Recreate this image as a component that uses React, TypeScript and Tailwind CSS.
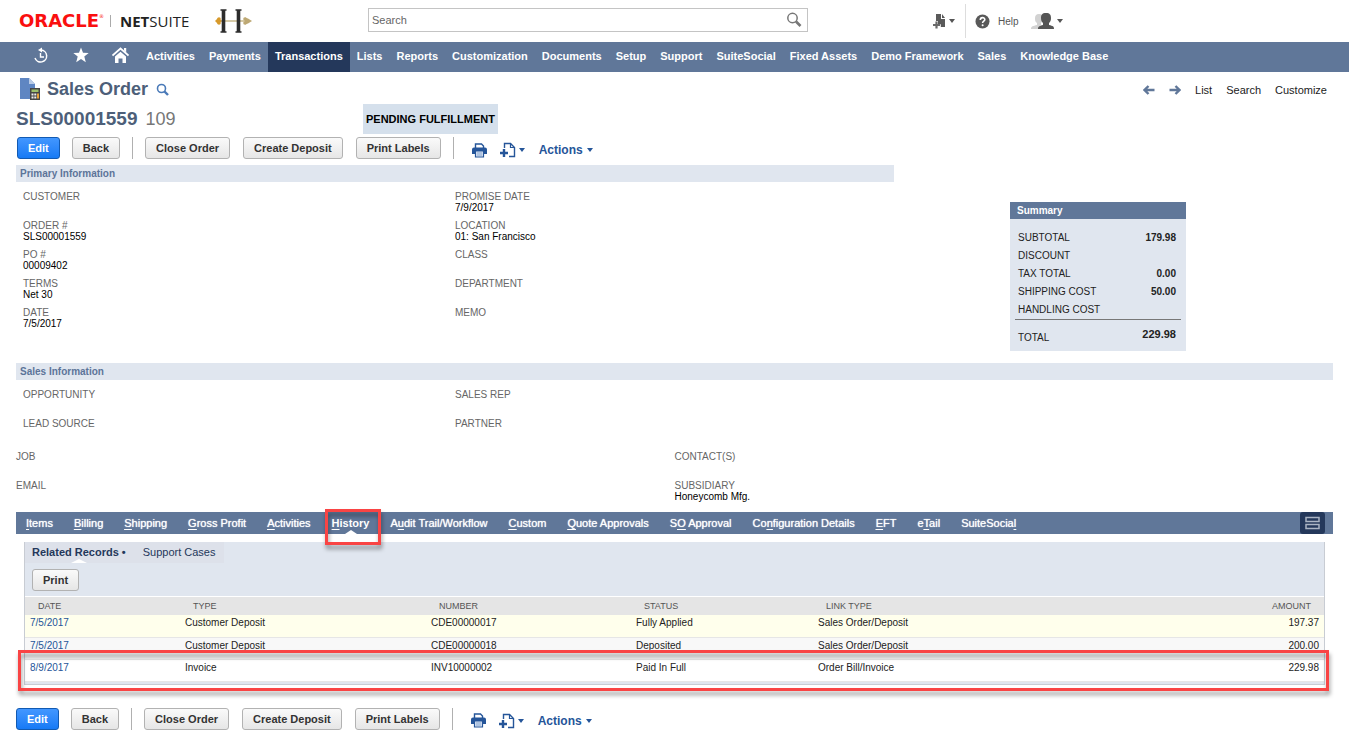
import { useState } from 'react';
import clsx from 'clsx';

type FieldData = { label: string; value?: string };

const navItems = [
  'Activities', 'Payments', 'Transactions', 'Lists', 'Reports', 'Customization', 'Documents',
  'Setup', 'Support', 'SuiteSocial', 'Fixed Assets', 'Demo Framework', 'Sales', 'Knowledge Base',
];

const primaryLeft: FieldData[] = [
  { label: 'CUSTOMER' },
  { label: 'ORDER #', value: 'SLS00001559' },
  { label: 'PO #', value: '00009402' },
  { label: 'TERMS', value: 'Net 30' },
  { label: 'DATE', value: '7/5/2017' },
];

const primaryRight: FieldData[] = [
  { label: 'PROMISE DATE', value: '7/9/2017' },
  { label: 'LOCATION', value: '01: San Francisco' },
  { label: 'CLASS' },
  { label: 'DEPARTMENT' },
  { label: 'MEMO' },
];

const summary = [
  { label: 'SUBTOTAL', value: '179.98' },
  { label: 'DISCOUNT', value: '' },
  { label: 'TAX TOTAL', value: '0.00' },
  { label: 'SHIPPING COST', value: '50.00' },
  { label: 'HANDLING COST', value: '' },
];

// [text, index of the underlined access key]
const tabs: [string, number][] = [
  ['Items', 0], ['Billing', 0], ['Shipping', 0], ['Gross Profit', 0], ['Activities', 0],
  ['History', 0], ['Audit Trail/Workflow', 1], ['Custom', 0], ['Quote Approvals', 0],
  ['SO Approval', 1], ['Configuration Details', 2], ['EFT', 0], ['eTail', 1], ['SuiteSocial', 10],
];

const records = [
  { date: '7/5/2017', type: 'Customer Deposit', number: 'CDE00000017', status: 'Fully Applied', link: 'Sales Order/Deposit', amount: '197.37' },
  { date: '7/5/2017', type: 'Customer Deposit', number: 'CDE00000018', status: 'Deposited', link: 'Sales Order/Deposit', amount: '200.00' },
  { date: '8/9/2017', type: 'Invoice', number: 'INV10000002', status: 'Paid In Full', link: 'Order Bill/Invoice', amount: '229.98' },
];

function Caret({ className }: { className?: string }) {
  return (
    <svg width="6" height="4" viewBox="0 0 6 4" className={className} fill="currentColor">
      <path d="M0 0h6L3 4z" />
    </svg>
  );
}

function CompanyLogo() {
  return (
    <svg width="38" height="26" viewBox="0 0 38 26">
      <path d="M4 13h30" stroke="#c9b98a" strokeWidth="1.500" />
      <path d="M0 13l3-3 4 3-4 3z" fill="#d79a2b" />
      <circle cx="4" cy="11" r="1.800" fill="#d79a2b" />
      <circle cx="4" cy="15" r="1.800" fill="#d79a2b" />
      <circle cx="30" cy="11" r="1.800" fill="#bda873" />
      <circle cx="30" cy="15" r="1.800" fill="#bda873" />
      <path d="M37 13l-4-2.500-3-1v7l3-1z" fill="#bda873" />
      <path d="M5.500 2h6M5.500 24h6M20.500 2h6M20.500 24h6" stroke="#2c2c2c" strokeWidth="1.500" />
      <path d="M8.500 2v22M23.500 2v22" stroke="#2c2c2c" strokeWidth="3.600" />
    </svg>
  );
}

function PrinterIcon() {
  return (
    <svg width="15" height="15" viewBox="0 0 15 15">
      <path d="M3.500 5V1h6l2 2v2" fill="#fff" stroke="#255599" strokeWidth="1.400" />
      <path d="M2 4.500h11a2 2 0 0 1 2 2V11H0V6.500a2 2 0 0 1 2-2z" fill="#255599" />
      <path d="M3.500 8h8v6h-8z" fill="#dfe8f5" stroke="#255599" strokeWidth="1.200" />
      <path d="M5 10h5M5 12h5" stroke="#7f9fcc" />
    </svg>
  );
}

function NewDocIcon() {
  return (
    <svg width="17" height="16" viewBox="0 0 17 16" fill="none" stroke="#255599">
      <path d="M5.500 6V1.500h6l4 4v9H10" strokeWidth="1.400" />
      <path d="M11.500 1.500v4h4" strokeWidth="1.200" />
      <path d="M5 7v8M1 11h8" strokeWidth="2.400" />
    </svg>
  );
}

function Header() {
  return (
    <header className="flex h-[42px] items-center">
      <div className="flex w-[368px] shrink-0 items-center pl-[19px]">
        <div className="flex w-[91px] items-start font-['DejaVu_Sans'] leading-4 text-[#fa0f0f]">
          <span className="text-[18px] font-bold">ORACLE</span>
          <span className="text-[5px] leading-[6px]">®</span>
        </div>
        <div className="h-3 w-px bg-[#aaa]" />
        <div className="ml-[9px] w-[85px] font-['Open_Sans'] text-[15px] leading-4 text-[#222]">
          <span className="font-bold">NET</span>SUITE
        </div>
        <div className="ml-2.5">
          <CompanyLogo />
        </div>
      </div>
      <div className="-mt-0.5 flex h-6 w-[440px] shrink-0 items-center border border-[#c4c4c4] pr-[5px]">
        <input
          type="text"
          aria-label="Search"
          placeholder="Search"
          className="h-full min-w-0 flex-1 px-[3px] text-[11px] text-[#333] outline-none placeholder:text-[#666]"
        />
        <button aria-label="Run search">
          <svg width="16" height="16" viewBox="0 0 16 16" fill="none" stroke="#777">
            <circle cx="6.500" cy="6" r="4.700" strokeWidth="1.500" />
            <path d="M10 9.500l4.500 4.500" strokeWidth="2.600" />
          </svg>
        </button>
      </div>
      <div className="ml-[124px] flex h-[34px] shrink-0 items-center text-[#555]">
        <button aria-label="Create new" className="flex items-center gap-px">
          <svg width="16" height="16" viewBox="0 0 16 16" fill="#5a5a5a">
            <path d="M4 1h5v5h4v8H8.800v-2.800H6V8H4z" />
            <path d="M10 1l3 4h-3z" />
            <path d="M4.500 8.500v7M1 12h7" stroke="#6a6a6a" strokeWidth="2.200" />
          </svg>
          <Caret />
        </button>
        <div className="ml-2.5 h-full w-px bg-[#ddd]" />
        <button className="ml-[9px] flex items-center gap-2 text-[10px]">
          <svg width="15" height="15" viewBox="0 0 15 15">
            <circle cx="7.500" cy="7.500" r="7" fill="#595959" />
            <path d="M5.300 5.900c0-3 4.500-2.900 4.500-.3 0 1.600-2.200 1.600-2.200 3.400" fill="none" stroke="#fff" strokeWidth="1.600" />
            <circle cx="7.600" cy="11.200" r="1" fill="#fff" />
          </svg>
          Help
        </button>
        <button aria-label="Change role" className="ml-3 flex items-center gap-0.5">
          <svg width="24" height="17" viewBox="0 0 24 17">
            <path d="M8 1c3 0 4 2 4 4s-1 4-2 5v2c3 1 4 1.500 4 4H0c0-3 2-3 6-4v-2C4 9 4 7 4 5s1-4 4-4z" fill="#d2d2d2" />
            <path d="M15 0c4 0 5 2 5 5s-1 4-2 5v2c4 1 5 1 5 4H7c0-3 2-3 5-4v-2c-1-1-2-2-2-5s1-5 5-5z" fill="#555" />
          </svg>
          <Caret />
        </button>
      </div>
    </header>
  );
}

function NavBar() {
  return (
    <nav className="flex h-[30px] items-stretch bg-[#607799] pl-[21px] text-[11px] font-bold text-white">
      <a href="#recent" aria-label="Recent records" className="flex w-10 items-center justify-center pb-1">
        <svg width="16" height="17" viewBox="0 0 16 17" fill="none" stroke="#fff">
          <path d="M8 3a6 6 0 1 1-6 8" strokeWidth="1.500" />
          <path d="M9 .5L5 3l4 2.500z" fill="#fff" stroke="none" />
          <path d="M7.500 6v4H11" strokeWidth="1.400" />
        </svg>
      </a>
      <a href="#shortcuts" aria-label="Shortcuts" className="flex w-10 items-center justify-center pb-1">
        <svg width="16" height="16" viewBox="0 0 16 16" fill="#fff">
          <path d="M8 .5l2 5.200 5.700.3-4.400 3.600 1.500 5.600L8 12l-4.800 3.200 1.500-5.600L.3 6 6 5.700z" />
        </svg>
      </a>
      <a href="#home" aria-label="Home" className="flex w-[38px] items-center justify-center pb-1">
        <svg width="17" height="17" viewBox="0 0 17 17">
          <path d="M.5 8.500l8-7 8 7" fill="none" stroke="#fff" strokeWidth="1.700" />
          <path d="M12 1h2.200v4.500L12 3.500z" fill="#fff" />
          <path d="M3 9.500L8.500 4.700 14 9.500V16h-3.500v-4.500h-4V16H3z" fill="#fff" />
        </svg>
      </a>
      {navItems.map((item) => (
        <a
          key={item}
          href="#nav"
          className={clsx('flex items-center whitespace-nowrap px-[7px] pb-px', item === 'Transactions' && 'bg-[#24385b]')}
        >
          {item}
        </a>
      ))}
    </nav>
  );
}

function GrayButton({ children }: { children: string }) {
  return (
    <button className="h-[22px] whitespace-nowrap rounded-[3px] border border-[#b2b2b2] bg-linear-to-b from-[#fafafa] to-[#e6e6e6] px-[10px] text-[11px] font-bold text-[#333]">
      {children}
    </button>
  );
}

function ActionBar() {
  return (
    <div className="flex items-center gap-3 text-[#255599]">
      <div className="flex gap-3">
        <button className="h-[22px] rounded-[3px] border border-[#125ab2] bg-linear-to-b from-[#4297ff] to-[#157af5] px-[10px] text-[11px] font-bold text-white">
          Edit
        </button>
        <GrayButton>Back</GrayButton>
      </div>
      <div className="h-[22px] w-px bg-[#b0b0b0]" />
      <div className="flex gap-[13px]">
        <GrayButton>Close Order</GrayButton>
        <GrayButton>Create Deposit</GrayButton>
        <GrayButton>Print Labels</GrayButton>
      </div>
      <div className="h-[22px] w-px bg-[#b0b0b0]" />
      <div className="flex items-center pl-1.5 pt-1">
        <button aria-label="Print">
          <PrinterIcon />
        </button>
        <button aria-label="New" className="ml-3 flex items-center gap-[3px]">
          <NewDocIcon />
          <Caret />
        </button>
        <button className="ml-3.5 flex items-center gap-1 text-[12px] font-bold leading-4">
          Actions
          <Caret />
        </button>
      </div>
    </div>
  );
}

function SectionBar({ title }: { title: string }) {
  return (
    <h2 className="h-[17px] bg-[#e0e6ef] pl-1 text-[10px] font-bold leading-[17px] text-[#5c7499]">{title}</h2>
  );
}

function FieldColumn({ fields, className }: { fields: FieldData[]; className?: string }) {
  return (
    <dl className={clsx('text-[10px] leading-[11px]', className)}>
      {fields.map((f) => (
        <div key={f.label} className="h-[29px]">
          <dt className="text-[#666]">{f.label}</dt>
          <dd className="text-black">{f.value}</dd>
        </div>
      ))}
    </dl>
  );
}

function SummaryBox() {
  return (
    <aside className="ml-[116px] mt-[37px] w-[176px] bg-[#e0e6ef] text-[10px] text-[#222]">
      <h2 className="h-[17px] bg-[#607799] pl-[7px] font-bold leading-[17px] text-white">Summary</h2>
      <dl className="mx-[5px] border-b border-[#777] pt-[10px]">
        {summary.map((s) => (
          <div key={s.label} className="flex h-[18px] justify-between pl-[3px] pr-[5px] leading-[18px]">
            <dt>{s.label}</dt>
            <dd className="font-bold">{s.value}</dd>
          </div>
        ))}
      </dl>
      <dl className="flex h-[31px] justify-between pl-2 pr-[10px]">
        <dt className="pt-1 leading-7">TOTAL</dt>
        <dd className="text-[11px] font-bold leading-7">229.98</dd>
      </dl>
    </aside>
  );
}

function TabBar({ active, onSelect }: { active: string; onSelect: (tab: string) => void }) {
  return (
    <div className="flex h-[22px] items-stretch gap-px bg-[#607799] pr-2 text-[11px] text-white">
      {tabs.map(([text, key]) => (
        <button
          key={text}
          onClick={() => onSelect(text)}
          className={clsx(
            'relative whitespace-nowrap px-[10px]',
            text === active ? 'font-bold' : 'text-shadow-[0_0_1px_#fff]',
          )}
        >
          {text.slice(0, key)}
          <span className="underline underline-offset-2">{text[key]}</span>
          {text.slice(key + 1)}
          {text === active && (
            <>
              <svg width="12" height="4" viewBox="0 0 12 4" className="absolute bottom-0 left-1/2 -translate-x-1/2">
                <path d="M0 4l6-4 6 4z" fill="#fff" />
              </svg>
              <span className="absolute -top-[3px] left-[3px] z-10 h-[36px] w-[56px] border-3 border-[#f94444] drop-shadow-[1px_4px_2px_rgba(0,0,0,0.4)]" />
            </>
          )}
        </button>
      ))}
      <button aria-label="Show all subtabs" className="ml-auto flex w-[25px] items-center justify-center rounded-[3px] bg-[#24385b]">
        <svg width="15" height="14" viewBox="0 0 15 14" fill="none" stroke="#aab4c4" strokeWidth="1.500">
          <path d="M1 1.500h13v4H1zM1 8.500h13v4H1z" />
        </svg>
      </button>
    </div>
  );
}

function RelatedRecords() {
  return (
    <section className="relative mx-2 mt-2">
      <div className="border-x border-b border-[#c8ccd3] bg-[#e0e6ef] pb-0.5">
        <div className="flex w-fit items-stretch bg-[#dde1ea] text-[11px] leading-[21px] text-[#24385b]">
          <button className="relative pl-[7px] pr-2 font-bold">
            Related Records •
            <svg width="16" height="4" viewBox="0 0 16 4" className="absolute bottom-0 left-1/2 -translate-x-1/2">
              <path d="M0 4l8-4 8 4z" fill="#fff" />
            </svg>
          </button>
          <button className="px-[9px]">Support Cases</button>
        </div>
        <div className="border-b border-white px-[7px] pb-[5px] pt-1">
          <GrayButton>Print</GrayButton>
        </div>
        <table className="w-full table-fixed border-collapse text-left text-[10px]">
          <thead>
            <tr className="h-[18px] bg-[#e5e5e5] text-[9px] text-[#555] [&>th]:py-0 [&>th]:pl-[13px] [&>th]:font-normal">
              <th className="w-[155px]">DATE</th>
              <th className="w-[246px]">TYPE</th>
              <th className="w-[205px]">NUMBER</th>
              <th className="w-[182px]">STATUS</th>
              <th>LINK TYPE</th>
              <th className="w-[80px] pr-[13px] text-right">AMOUNT</th>
            </tr>
          </thead>
          <tbody>
            {records.map((r, i) => (
              <tr
                key={r.number}
                className={clsx(
                  'h-[22px] border-b border-[#e6e6e6] align-top leading-[15px] text-[#222] [&>td]:px-[5px] [&>td]:py-0',
                  i === 0 ? 'bg-[#ffffec]' : i === 1 ? 'bg-[#f8f8f8]' : 'bg-white',
                )}
              >
                <td>
                  <a href="#record" className="text-[#255599]">{r.date}</a>
                </td>
                <td>{r.type}</td>
                <td>{r.number}</td>
                <td>{r.status}</td>
                <td>{r.link}</td>
                <td className="text-right">{r.amount}</td>
              </tr>
            ))}
          </tbody>
        </table>
      </div>
      <div className="pointer-events-none absolute -bottom-[6px] -left-[6px] -right-[4px] h-[41px] border-3 border-[#f94444] drop-shadow-[1px_4px_2px_rgba(0,0,0,0.4)]" />
    </section>
  );
}

function App() {
  const [activeTab, setActiveTab] = useState('History');

  return (
    <div className="min-h-screen bg-white font-['Liberation_Sans',Arial,sans-serif]">
      <Header />
      <NavBar />
      <main className="px-4 pb-4 pt-0.5">
        <div className="flex h-[30px] items-center justify-between pl-[3px] pr-1.5">
          <div className="flex items-center">
            <svg width="22" height="24" viewBox="0 0 22 24">
              <path d="M1 1h9l6 6v15H1z" fill="#5f86c2" />
              <path d="M10 1l6 6h-6z" fill="#b9cbe6" />
              <path d="M11 11h10v12H11z" fill="#454545" />
              <path d="M12.500 12.500h7v2.500h-7z" fill="#9cc06a" />
              <path d="M12.500 16.500h2v2h-2zM15.300 16.500h2v2h-2zM12.500 19.500h2v2h-2zM15.300 19.500h2v2h-2z" fill="#eee" />
              <path d="M18 16.500h2v5h-2z" fill="#e8a33a" />
            </svg>
            <h1 className="ml-1.5 text-[18px] font-bold leading-[30px] text-[#4d5f79]">Sales Order</h1>
            <button aria-label="Quick find" className="ml-2">
              <svg width="13" height="13" viewBox="0 0 13 13" fill="none" stroke="#4a7ab8">
                <circle cx="5.500" cy="5.500" r="4" strokeWidth="1.600" />
                <path d="M8.500 8.500l3.500 3.500" strokeWidth="2.400" />
              </svg>
            </button>
          </div>
          <div className="flex items-center gap-[14px] pt-0.5 text-[11px] text-[#222]">
            <a href="#prev" aria-label="Previous">
              <svg width="12" height="10" viewBox="0 0 12 10" fill="none" stroke="#607799" strokeWidth="2.400">
                <path d="M11.500 5H2M5.500 1L1.500 5l4 4" />
              </svg>
            </a>
            <a href="#next" aria-label="Next">
              <svg width="12" height="10" viewBox="0 0 12 10" fill="none" stroke="#607799" strokeWidth="2.400">
                <path d="M.5 5H10M6.500 1l4 4-4 4" />
              </svg>
            </a>
            <a href="#list">List</a>
            <a href="#search">Search</a>
            <a href="#customize">Customize</a>
          </div>
        </div>
        <div className="flex h-[30px] items-stretch">
          <div className="flex w-[347px] items-center gap-2 text-[19px] text-[#4d5f79]">
            <span className="font-bold">SLS00001559</span>
            <span className="text-[18px] text-[#777]">109</span>
          </div>
          <div className="flex items-center bg-[#d5e0ec] px-[3px] text-[11px] font-bold text-black">
            PENDING FULFILLMENT
          </div>
        </div>
        <div className="mt-[3px] pl-px">
          <ActionBar />
        </div>

        <section className="mt-1.5 grid grid-cols-3">
          <div className="col-span-2">
            <SectionBar title="Primary Information" />
            <div className="grid grid-cols-2 pt-[9px]">
              <FieldColumn fields={primaryLeft} className="pl-[7px]" />
              <FieldColumn fields={primaryRight} />
            </div>
          </div>
          <SummaryBox />
        </section>

        <section className="mt-3">
          <SectionBar title="Sales Information" />
          <div className="grid grid-cols-3 pt-[9px]">
            <FieldColumn fields={[{ label: 'OPPORTUNITY' }, { label: 'LEAD SOURCE' }]} className="pl-[7px]" />
            <FieldColumn fields={[{ label: 'SALES REP' }, { label: 'PARTNER' }]} />
          </div>
          <div className="mt-1 grid grid-cols-2">
            <FieldColumn fields={[{ label: 'JOB' }, { label: 'EMAIL' }]} />
            <FieldColumn fields={[{ label: 'CONTACT(S)' }, { label: 'SUBSIDIARY', value: 'Honeycomb Mfg.' }]} />
          </div>
        </section>

        <div className="mt-[3px]">
          <TabBar active={activeTab} onSelect={setActiveTab} />
        </div>
        <RelatedRecords />
        <div className="mt-[23px]">
          <ActionBar />
        </div>
      </main>
    </div>
  );
}

export default App;
